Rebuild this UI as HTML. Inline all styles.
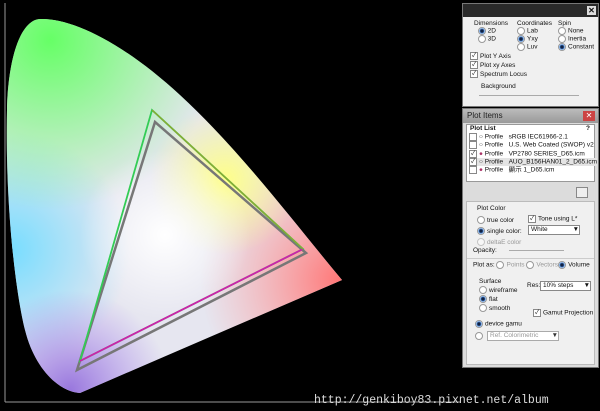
<!DOCTYPE html><html><head><meta charset="utf-8"><style>
body{margin:0;width:600px;height:411px;background:#000;position:relative;overflow:hidden;font-family:"Liberation Sans","Noto Sans CJK TC",sans-serif;font-size:6.5px;color:#111}
.p{position:absolute}
.rb{display:inline-block;width:6px;height:6px;border:1px solid #999;border-radius:50%;background:#fff;vertical-align:middle;margin-right:2px}
.rb.on{background:radial-gradient(circle,#124 30%,#6af 60%,#fff 70%)}
.cb{display:inline-block;width:6px;height:6px;border:1px solid #888;background:#fff;vertical-align:middle;margin-right:2px;font-size:6px;line-height:6px;text-align:center}
</style></head><body>
<svg class="p" style="left:0;top:0" width="460" height="411">
<defs>
<clipPath id="hs"><path d="M40,19 C20,20 8,60 7,110 C5,200 15,290 25,330 C35,370 60,392 80,393 L342,280 C300,230 240,150 180,95 C120,40 70,18 40,19Z"/></clipPath>
<radialGradient id="g1" cx="50" cy="40" r="170" gradientUnits="userSpaceOnUse"><stop offset="0" stop-color="#6f6"/><stop offset="1" stop-color="#6f6" stop-opacity="0"/></radialGradient>
<radialGradient id="g2" cx="10" cy="250" r="120" gradientUnits="userSpaceOnUse"><stop offset="0" stop-color="#7df"/><stop offset="1" stop-color="#7df" stop-opacity="0"/></radialGradient>
<radialGradient id="g3" cx="70" cy="390" r="100" gradientUnits="userSpaceOnUse"><stop offset="0" stop-color="#97d"/><stop offset="1" stop-color="#a8e" stop-opacity="0"/></radialGradient>
<radialGradient id="g4" cx="340" cy="280" r="140" gradientUnits="userSpaceOnUse"><stop offset="0" stop-color="#f77"/><stop offset="1" stop-color="#f99" stop-opacity="0"/></radialGradient>
<radialGradient id="g5" cx="225" cy="180" r="75" gradientUnits="userSpaceOnUse"><stop offset="0" stop-color="#ff8"/><stop offset="1" stop-color="#ff8" stop-opacity="0"/></radialGradient>
<radialGradient id="g6" cx="165" cy="235" r="85" gradientUnits="userSpaceOnUse"><stop offset="0" stop-color="#fff"/><stop offset="1" stop-color="#fff" stop-opacity="0"/></radialGradient>
</defs>
<line x1="5" y1="3" x2="5" y2="402" stroke="#999"/><line x1="5" y1="402" x2="460" y2="402" stroke="#999"/>
<g clip-path="url(#hs)"><rect width="460" height="411" fill="#e6e6f0"/>
<rect width="460" height="411" fill="url(#g2)"/><rect width="460" height="411" fill="url(#g1)"/><rect width="460" height="411" fill="url(#g3)"/><rect width="460" height="411" fill="url(#g4)"/><rect width="460" height="411" fill="url(#g5)"/><rect width="460" height="411" fill="url(#g6)"/></g>
<path d="M155,122 L306,253 L77,370Z" fill="none" stroke="#777" stroke-width="2.5"/>
<path d="M152,110 L303,249 L80,361Z" fill="none" stroke="#3c5" stroke-width="1.8"/>
<path d="M303,249 L80,361" stroke="#c2a" stroke-width="1.8"/>
<path d="M152,110 L303,249" stroke="#8a3" stroke-width="1.5"/>
</svg>
<div class="p" style="left:314px;top:394px;font-family:'Liberation Mono',monospace;font-size:11.5px;color:#ddd">http://genkiboy83.pixnet.net/album</div>

<div class="p" style="left:462px;top:3px;width:135px;height:102px;background:#f0f0f0;border:1px solid #777">
<div style="height:13px;background:#2a2a2a;position:relative"><div class="p" style="right:2px;top:2px;width:9px;height:9px;background:#ddd;font-size:8px;line-height:9px;text-align:center;font-weight:bold">✕</div></div>
<div class="p" style="left:11px;top:16px">Dimensions<br>&nbsp;&nbsp;<span class="rb on"></span>2D<br>&nbsp;&nbsp;<span class="rb"></span>3D</div>
<div class="p" style="left:54px;top:16px">Coordinates<br><span class="rb"></span>Lab<br><span class="rb on"></span>Yxy<br><span class="rb"></span>Luv</div>
<div class="p" style="left:95px;top:16px">Spin<br><span class="rb"></span>None<br><span class="rb"></span>Inertia<br><span class="rb on"></span>Constant</div>
<div class="p" style="left:7px;top:48px;line-height:9px"><span class="cb">✓</span>Plot Y Axis<br><span class="cb">✓</span>Plot xy Axes<br><span class="cb">✓</span>Spectrum Locus</div>
<div class="p" style="left:18px;top:79px">Background</div>
<div class="p" style="left:16px;top:91px;width:100px;height:1px;background:#aaa"></div>
</div>

<div class="p" style="left:462px;top:108px;width:135px;height:258px;background:#dcdcdc;border:1px solid #777">
<div style="height:14px;background:linear-gradient(#bbb,#999);position:relative;font-size:8px;color:#222;line-height:14px;padding-left:4px">Plot Items<div class="p" style="right:3px;top:2px;width:12px;height:10px;background:#c44;color:#fff;font-size:8px;line-height:10px;text-align:center">✕</div></div>
<div class="p" style="left:3px;top:15px;width:127px;height:56px;background:#fff;border:1px solid #999">
<div style="font-weight:bold;padding-left:3px;height:8px">Plot List<span style="float:right;margin-right:4px">?</span></div>
<div style="line-height:7.6px;padding-left:2px;white-space:nowrap">
<span class="cb"></span>○ Profile &nbsp;&nbsp;sRGB IEC61966-2.1<br>
<span class="cb"></span>○ Profile &nbsp;&nbsp;U.S. Web Coated (SWOP) v2<br>
<span class="cb">✓</span><span style="color:#a36">●</span> Profile &nbsp;&nbsp;VP2780 SERIES_D65.icm<br>
<span style="background:#e4e4e4;display:inline-block"><span class="cb">✓</span>○ Profile &nbsp;&nbsp;AUO_B156HAN01_2_D65.icm</span><br>
<span class="cb"></span><span style="color:#a36">●</span> Profile &nbsp;&nbsp;顯示 1_D65.icm</div></div>
<div class="p" style="left:113px;top:78px;width:10px;height:9px;background:#eee;border:1px solid #888"></div>
<div class="p" style="left:3px;top:92px;width:127px;height:162px;background:#f0f0f0;border:1px solid #bbb">
<div class="p" style="left:10px;top:3px">Plot Color</div>
<div class="p" style="left:10px;top:13px;line-height:11px"><span class="rb"></span>true color<br><span class="rb on"></span>single color:<br><span class="rb" style="opacity:.5"></span><span style="color:#999">deltaE color</span></div>
<div class="p" style="left:61px;top:13px"><span class="cb">✓</span>Tone using L*</div>
<div class="p" style="left:61px;top:23px;width:48px;height:8px;background:#fff;border:1px solid #888;padding-left:2px">White<span style="float:right">▼</span></div>
<div class="p" style="left:6px;top:45px">Opacity:</div>
<div class="p" style="left:42px;top:48px;width:55px;height:1px;background:#aaa"></div>
<div class="p" style="left:0;top:56px;width:127px;border-top:1px solid #ccc"></div>
<div class="p" style="left:6px;top:59px">Plot as: <span class="rb"></span><span style="color:#999">Points</span> <span class="rb"></span><span style="color:#999">Vectors</span><span class="rb on"></span>Volume</div>
<div class="p" style="left:12px;top:75px;line-height:9px">Surface<br><span class="rb"></span>wireframe<br><span class="rb on"></span>flat<br><span class="rb"></span>smooth</div>
<div class="p" style="left:60px;top:80px">Res:</div>
<div class="p" style="left:73px;top:79px;width:47px;height:8px;background:#fff;border:1px solid #888;padding-left:2px">10% steps<span style="float:right">▼</span></div>
<div class="p" style="left:66px;top:107px"><span class="cb">✓</span>Gamut Projection</div>
<div class="p" style="left:8px;top:118px"><span class="rb on"></span>device gamu</div>
<div class="p" style="left:8px;top:130px"><span class="rb"></span></div>
<div class="p" style="left:20px;top:129px;width:68px;height:8px;background:#fff;border:1px solid #aaa;padding-left:2px;color:#999">Ref. Colorimetric<span style="float:right;color:#333">▼</span></div>
</div>
</div>
</body></html>
